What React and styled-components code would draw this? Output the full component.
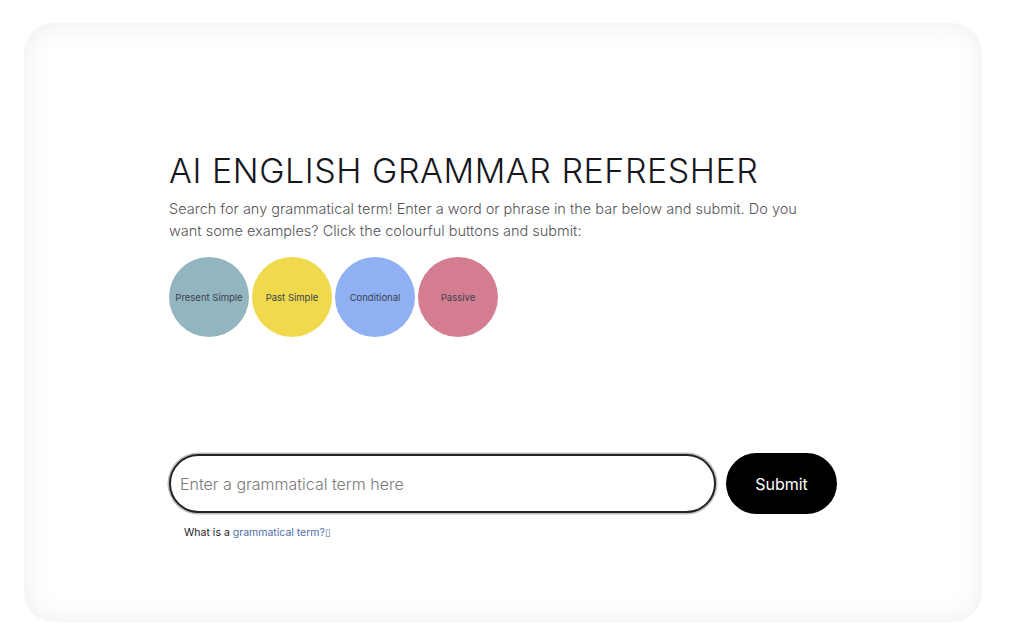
import React, { useState } from 'react';
import styled, { createGlobalStyle } from 'styled-components';

const examples = [
  { label: 'Present Simple', color: '#93b5bf' },
  { label: 'Past Simple', color: '#f0d94c' },
  { label: 'Conditional', color: '#8fb1f4' },
  { label: 'Passive', color: '#d57d90' },
];

function App() {
  const [term, setTerm] = useState('');

  return (
    <>
      <GlobalStyle />
      <Page>
        <Card>
          <Title>AI ENGLISH GRAMMAR REFRESHER</Title>
          <Intro>
            Search for any grammatical term! Enter a word or phrase in the bar below and submit. Do you
            want some examples? Click the colourful buttons and submit:
          </Intro>
          <Bubbles>
            {examples.map((ex) => (
              <Bubble key={ex.label} $bg={ex.color} onClick={() => setTerm(ex.label)}>
                {ex.label}
              </Bubble>
            ))}
          </Bubbles>
          <SearchRow>
            <SearchInput
              value={term}
              onChange={(e) => setTerm(e.target.value)}
              placeholder="Enter a grammatical term here"
            />
            <SubmitButton>Submit</SubmitButton>
          </SearchRow>
          <Help>
            What is a <HelpLink href="#">grammatical term?<Tofu>▯</Tofu></HelpLink>
          </Help>
        </Card>
      </Page>
    </>
  );
}

const GlobalStyle = createGlobalStyle`
  body {
    margin: 0;
    background: #ffffff;
    font-family: Inter, "Noto Sans", sans-serif;
  }
`;

const Page = styled.div`
  padding: 23px 27px 22px 24px;
`;

const Card = styled.div`
  box-sizing: border-box;
  height: 599px;
  border-radius: 30px;
  background: #ffffff;
  box-shadow: inset 0 0 28px rgba(0, 0, 0, 0.07);
  padding: 127px 130px 0 145px;
  display: flex;
  flex-direction: column;
`;

const Title = styled.h1`
  margin: 0;
  font-size: 34px;
  font-weight: 300;
  line-height: 42px;
  color: #16161d;
  letter-spacing: 0.55px;
`;

const Intro = styled.p`
  margin: 6px 0 0;
  max-width: 660px;
  font-size: 14.5px;
  line-height: 22px;
  color: #555558;
  font-weight: 300;
`;

const Bubbles = styled.div`
  display: flex;
  gap: 3px;
  margin-top: 15px;
`;

const Bubble = styled.button`
  width: 80px;
  height: 80px;
  border-radius: 50%;
  border: none;
  padding: 0;
  background: ${(p) => p.$bg};
  color: #3a4150;
  font-family: Inter, "Noto Sans", sans-serif;
  font-size: 9.5px;
  cursor: pointer;
`;

const SearchRow = styled.div`
  display: flex;
  align-items: center;
  gap: 10px;
  margin-top: 116px;
`;

const SearchInput = styled.input`
  box-sizing: border-box;
  flex: none;
  width: 547px;
  height: 59px;
  border-radius: 30px;
  border: 2px solid #222;
  box-shadow: 0 0 0 1.5px #bdbdbd;
  padding: 0 9px;
  font-family: Inter, "Noto Sans", sans-serif;
  font-size: 16px;
  color: #222;
  outline: none;

  &::placeholder {
    color: #7a7a7a;
    font-weight: 300;
  }
`;

const SubmitButton = styled.button`
  flex: none;
  width: 111px;
  height: 61px;
  border-radius: 31px;
  border: none;
  background: #000;
  color: #fff;
  font-family: Inter, "Noto Sans", sans-serif;
  font-size: 16px;
  cursor: pointer;
`;

const Help = styled.div`
  margin: 12px 0 0 15px;
  font-size: 10.5px;
  color: #222;
`;

const HelpLink = styled.a`
  color: #4b6ea8;
  text-decoration: none;
`;

const Tofu = styled.span`
  font-family: "DejaVu Sans", sans-serif;
  font-size: 10px;
`;

export default App;
